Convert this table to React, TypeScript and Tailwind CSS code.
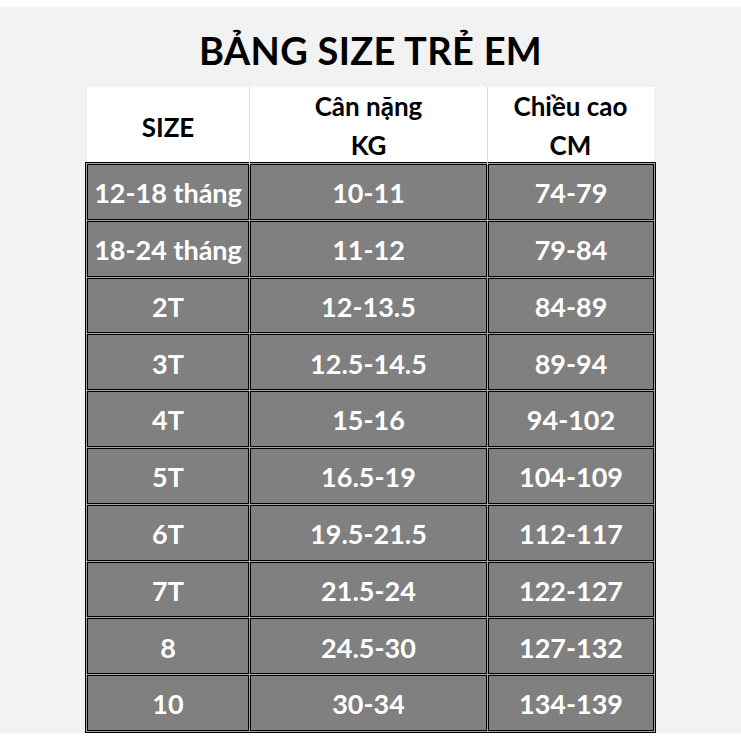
const rows = [
  ["12-18 tháng", "10-11", "74-79"],
  ["18-24 tháng", "11-12", "79-84"],
  ["2T", "12-13.5", "84-89"],
  ["3T", "12.5-14.5", "89-94"],
  ["4T", "15-16", "94-102"],
  ["5T", "16.5-19", "104-109"],
  ["6T", "19.5-21.5", "112-117"],
  ["7T", "21.5-24", "122-127"],
  ["8", "24.5-30", "127-132"],
  ["10", "30-34", "134-139"],
];

export default function App() {
  return (
    <div className="w-[741px] h-[741px] bg-white pt-[7px] font-['Lato',sans-serif]">
      <div className="h-[726px] bg-[#f2f2f2] flex flex-col items-center">
        {/* title */}
        <h1 className="mt-[20px] h-[60px] text-[38px] leading-[46px] font-bold text-black tracking-[0.3px]">
          BẢNG SIZE TRẺ EM
        </h1>

        <div className="w-[571px]">
          {/* header */}
          <div className="mx-[2px] h-[75px] bg-white grid grid-cols-[162px_1px_237px_1px_165px] text-[26px] font-bold text-black leading-[39px] text-center">
            <div className="flex items-center justify-center pt-[2px]">SIZE</div>
            <div className="bg-[#d6d6d6]" />
            <div className="flex flex-col justify-center">
              <span>Cân nặng</span>
              <span>KG</span>
            </div>
            <div className="bg-[#d6d6d6]" />
            <div className="flex flex-col justify-center">
              <span>Chiều cao</span>
              <span>CM</span>
            </div>
          </div>

          {/* body */}
          <div className="border border-black bg-[#a6a6a6] p-px">
            <div className="grid grid-cols-[162px_237px_166px] gap-px">
              {rows.map((r) =>
                r.map((c, i) => (
                  <div
                    key={r[0] + i}
                    className="h-[55.8px] border border-black bg-[#808080] flex items-center justify-center pt-[3px] text-white text-[27px] font-bold"
                  >
                    {c}
                  </div>
                ))
              )}
            </div>
          </div>
        </div>
      </div>
    </div>
  );
}
